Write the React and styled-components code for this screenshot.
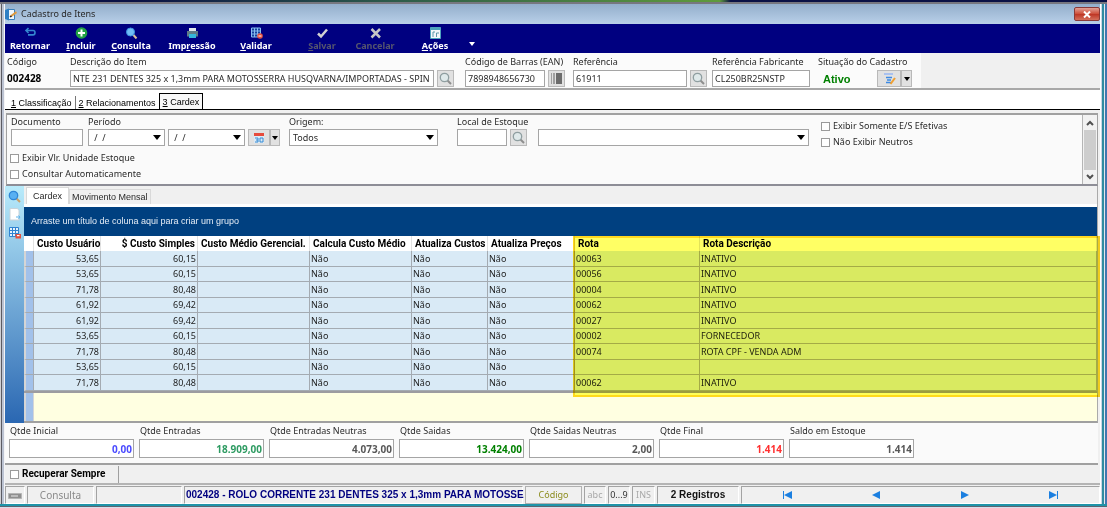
import React from 'react'
import styled, { createGlobalStyle, css } from 'styled-components'

const GlobalStyle = createGlobalStyle`
  * {
    box-sizing: border-box;
  }
  body {
    margin: 0;
    background: #d4dfec;
    color: #2a2a2a;
    font-family: 'Noto Sans', 'Open Sans', sans-serif;
    font-size: 9px;
    line-height: 12px;
  }
  button, input, select {
    font: inherit;
    color: inherit;
    margin: 0;
    padding: 0;
    border-radius: 0;
  }
`

/* window frame */

const Desktop = styled.div`
  display: flex;
  flex-direction: column;
  min-height: 100vh;
`

const Wallpaper = styled.div`
  height: 4px;
  border-bottom: 2px solid #77777f;
  background: linear-gradient(90deg, #0a1145 12%, #2c5a4a 35%, #5f9b3c 65%, #0a1145 66%);
`

const Frame = styled.div`
  display: flex;
  flex: 1;
`

const LeftEdge = styled.div`
  width: 5px;
  background: linear-gradient(90deg, #d0d0d4 0 1px, #5b5b63 1px 2px, #bcc3d2 2px 4px, #f4f4f6 4px);
`

const RightEdge = styled.div`
  width: 7px;
  background: linear-gradient(90deg, #fff 0 1px, #c9d7e5 1px 2px, #2f8ca0 2px 4px, #e4e8ec 4px 5px, #3f78b0 5px);
`

const Window = styled.main`
  flex: 1;
  min-width: 0;
  display: flex;
  flex-direction: column;
  background: #f0f0f0;
`

const BottomEdge = styled.div`
  height: 4px;
  border-top: 2px solid #1e93a8;
  border-bottom: 1px solid #d4dfec;
  background: #5c6470;
`

const TitleBar = styled.header`
  display: flex;
  align-items: center;
  gap: 4px;
  height: 20px;
  background: linear-gradient(#93aecb, #b9d0e9);
`

const Title = styled.h1`
  flex: 1;
  margin: 0;
  font-size: 9px;
  font-weight: 400;
`

const CloseButton = styled.button`
  display: flex;
  align-items: center;
  justify-content: center;
  width: 26px;
  height: 14px;
  border: 1px solid #8a3a38;
  border-radius: 2px;
  background: linear-gradient(#e2a297, #cd4c37 50%, #bd3524 51%, #d4705c);
`

/* toolbar */

const Toolbar = styled.nav`
  display: flex;
  height: 29px;
  background: #000080;
`

const ToolButton = styled.button`
  display: flex;
  flex-direction: column;
  align-items: center;
  width: ${(p) => p.$width}px;
  margin-left: ${(p) => (p.$apart ? 16 : 0)}px;
  padding-top: 3px;
  border: 0;
  background: none;
  color: ${(p) => (p.disabled ? '#55556e' : '#fff')};
  font-size: 9px;
  font-weight: 700;
  line-height: 13px;
`

const CaretButton = styled.button`
  width: 14px;
  padding-top: 10px;
  border: 0;
  background: none;
  line-height: 0;
`

/* shared form parts */

const Field = styled.div`
  display: flex;
  flex-direction: column;
  width: ${(p) => (p.$width ? `${p.$width}px` : 'auto')};
  margin-right: ${(p) => p.$after || 0}px;
`

const Label = styled.label`
  height: ${(p) => p.$height || 14}px;
  white-space: nowrap;
`

const Line = styled.div`
  display: flex;
  align-items: center;
  gap: 3px;
`

const box = css`
  height: 17px;
  border: 1px solid #a5a5a5;
  background: #fff;
`

const TextBox = styled.input`
  ${box}
  flex: 1;
  min-width: 0;
  padding: 0 2px;
`

const SmallButton = styled.button`
  display: flex;
  align-items: center;
  justify-content: center;
  flex: none;
  width: ${(p) => p.$width || 17}px;
  height: 17px;
  border: 1px solid #b9b9b9;
  background: #e1e1e1;
`

const Combo = styled.div`
  ${box}
  display: grid;
  grid-template-columns: 1fr 15px;
  align-items: center;
  width: ${(p) => p.$width}px;

  select, input {
    grid-area: 1 / 1 / 2 / 3;
    width: 100%;
    height: 15px;
    padding: 0 3px;
    border: 0;
    background: none;
    appearance: none;
  }
  svg {
    grid-area: 1 / 2;
    justify-self: center;
    pointer-events: none;
  }
`

const CheckLabel = styled.label`
  display: flex;
  align-items: center;
  gap: 3px;
  height: 16px;
  white-space: nowrap;
  font-weight: ${(p) => (p.$bold ? 700 : 400)};
`

const CheckBox = styled.input`
  width: 9px;
  height: 9px;
  border: 1px solid #9a9a9a;
  background: #fff;
  appearance: none;
`

/* item header */

const ItemHeader = styled.section`
  display: flex;
  height: 37px;
  border-bottom: 2px solid #a8a8a8;
`

const ItemFields = styled.div`
  display: flex;
  width: 916px;
  padding: 3px 0 0 2px;
  background: #fbfbfb;
`

const Code = styled.output`
  color: #000;
  font-size: 10px;
  font-weight: 700;
  line-height: 17px;
`

const Status = styled.output`
  width: 56px;
  padding-left: 5px;
  color: #008000;
  font-family: 'Liberation Sans', Arial, sans-serif;
  font-size: 11px;
  font-weight: 700;
`

const SplitButton = styled.div`
  display: flex;
`

/* tabs */

const MainTabs = styled.div`
  display: flex;
  align-items: flex-end;
  height: 20px;
  border-bottom: 1px solid #000;
  background: #fff;
  font-family: 'Liberation Sans', Arial, sans-serif;
`

const MainTab = styled.button`
  height: ${(p) => (p.$active ? 16 : 13)}px;
  padding: 0 3px;
  border: 0;
  border-right: ${(p) => (p.$last ? 0 : 1)}px solid #777;
  background: none;
  color: #000;
  white-space: nowrap;
  &:first-child {
    padding-left: 6px;
  }
  ${(p) =>
    p.$active &&
    css`
      border: 1px solid #000;
      border-bottom: 0;
      background: #f8f8f8;
    `}
`

const Filters = styled.section`
  display: flex;
  height: 73px;
  margin: 3px 2px 0 1px;
  border: 1px solid #a0a0a0;
  border-top-width: 2px;
  border-bottom: 2px solid #8d8d96;
  background: #fafafa;
`

const FilterBody = styled.div`
  display: flex;
  flex-direction: column;
  flex: 1;
  padding: 1px 0 0 3px;
`

const FilterRow = styled.div`
  display: flex;
  height: 34px;
  padding-left: 1px;
`

const FilterChecks = styled.div`
  padding-top: 2px;
`

const ScrollBar = styled.div`
  display: flex;
  flex-direction: column;
  align-items: center;
  width: 15px;
  padding: 5px 1px 4px;
  gap: 4px;
  border-left: 1px solid #b5b5b5;
  background: #f2f2f2;
`

const Thumb = styled.div`
  align-self: stretch;
  height: 40px;
  background: #cdcdcd;
`

/* grid */

const GridArea = styled.section`
  display: flex;
  margin-right: 2px;
`

const SideBar = styled.div`
  display: flex;
  flex-direction: column;
  align-items: center;
  gap: 5px;
  width: 19px;
  padding-top: 4px;
  background: linear-gradient(#b9ebfb, #2a67b2);
`

const SideButton = styled.button`
  height: 13px;
  border: 0;
  background: none;
  line-height: 0;
`

const GridMain = styled.div`
  display: flex;
  flex-direction: column;
  flex: 1;
  min-width: 0;
  border-right: 1px solid #aaa;
  border-bottom: 2px solid #a0a0a0;
  background: #ffffe1;
`

const GridTabs = styled.div`
  display: flex;
  align-items: flex-end;
  height: 21px;
  padding-left: 2px;
  border-bottom: 3px solid #fff;
  background: #f0f0f0;
`

const GridTab = styled.button`
  height: ${(p) => (p.$active ? 17 : 15)}px;
  padding: 0 ${(p) => (p.$active ? 6 : 2)}px;
  border: 1px solid #d9d9d9;
  border-bottom: 0;
  background: ${(p) => (p.$active ? '#fff' : '#f0f0f0')};
  font-family: 'Liberation Sans', Arial, sans-serif;
  white-space: nowrap;
`

const GroupBar = styled.div`
  height: 29px;
  padding-left: 7px;
  background: #004080;
  color: #e4ecf5;
  font-family: 'Liberation Sans', Arial, sans-serif;
  line-height: 29px;
`

const TableWrap = styled.div`
  position: relative;
`

const Table = styled.table`
  width: 100%;
  border-collapse: separate;
  border-spacing: 0;
  table-layout: fixed;
  border-bottom: 2px solid #9c9ca0;
  color: #1c1c1c;

  th {
    height: 15px;
    padding: 0 2px 0 3px;
    border-right: 1px solid #e2e2e2;
    background: #fff;
    color: #000;
    font-family: Roboto, Arial, sans-serif;
    font-size: 10px;
    font-weight: 700;
    text-align: left;
    white-space: nowrap;
  }
  td {
    height: 16px;
    padding: 0 1px;
    border-right: 1px solid #a4abb2;
    border-bottom: 1px solid #a4abb2;
    background: #d9eaf6;
    line-height: 14px;
  }
  tr:nth-child(even) td {
    height: 15px;
  }
  td:first-child {
    border-left: 2px solid #d5d5d5;
    background: #a2c1ea;
  }
  th.num, td.num {
    text-align: right;
  }
`

const Highlight = styled.div`
  position: absolute;
  top: 0;
  right: -3px;
  bottom: -4px;
  left: 549px;
  border: 2px solid #ffd91f;
  background: #ffff64;
  mix-blend-mode: multiply;
  pointer-events: none;
`

const EmptyRows = styled.div`
  width: 10px;
  height: 28px;
  border-right: 1px solid #d5d5d5;
  border-left: 2px solid #d5d5d5;
  background: #a2c1ea;
`

/* totals */

const Totals = styled.section`
  display: flex;
  gap: 5px;
  height: 42px;
  margin-right: 2px;
  padding: 2px 4px 0;
  border-bottom: 2px solid #a0a0a0;
  background: #fafafa;

  label {
    padding-left: 1px;
  }
`

const TotalBox = styled.input`
  width: 100%;
  height: 19px;
  padding: 0 1px;
  border: 1px solid #a5a5a5;
  background: #fff;
  color: ${(p) => p.$color};
  font-size: 10px;
  font-weight: 700;
  text-align: right;
`

const RecoverBar = styled.div`
  display: flex;
  height: 20px;
  padding-top: 1px;
  border-bottom: 2px solid #b4b4b4;
  color: #000;
  font-family: Roboto, Arial, sans-serif;
  font-size: 10px;
`

const RecoverCell = styled.div`
  width: 114px;
  padding-left: 5px;
  border-right: 1px solid #a0a0a0;
`

/* status bar */

const StatusBar = styled.footer`
  display: flex;
  gap: 2px;
  height: 19px;
  padding-top: 1px;
  color: #8a8a8a;
`

const Panel = styled.div`
  display: flex;
  align-items: center;
  justify-content: ${(p) => p.$justify || 'center'};
  flex: ${(p) => (p.$width ? 'none' : 1)};
  width: ${(p) => (p.$width ? `${p.$width}px` : 'auto')};
  border: 1px solid #a3a3a3;
  border-right-color: #fff;
  border-bottom-color: #fff;
  color: ${(p) => p.$color || 'inherit'};
  font-size: ${(p) => (p.$small ? 9 : 10)}px;
  white-space: nowrap;
`

const ItemName = styled.strong`
  padding-left: 1px;
  font-family: 'Liberation Sans', Arial, sans-serif;
`

const Records = styled.strong`
  font-family: 'Liberation Sans', Arial, sans-serif;
`

const StatusButton = styled.button`
  width: 57px;
  border: 1px solid #b0b0b0;
  background: #f0f0f0;
  color: #8c8c1e;
`

const NavButton = styled.button`
  border: 0;
  background: none;
  line-height: 0;
`

/* icons */

const Lens = ({ blue, size = 13 }) => (
  <svg width={size} height={size} viewBox="0 0 13 13">
    <path d="M8.5 8.5 12 12" stroke={blue ? '#c9a06a' : '#8e8e8e'} strokeWidth="2" />
    <circle cx="5.5" cy="5.5" r="4.2" fill={blue ? '#58b0f2' : '#dfe9ea'} stroke={blue ? '#2f86d6' : '#8f9ea0'} strokeWidth="1.3" />
  </svg>
)

const Caret = ({ color = '#000' }) => (
  <svg width="8" height="5" viewBox="0 0 8 5">
    <path d="M0 0h8L4 5z" fill={color} />
  </svg>
)

const SmallCaret = ({ color = '#000' }) => (
  <svg width="6" height="4" viewBox="0 0 6 4">
    <path d="M0 0h6L3 4z" fill={color} />
  </svg>
)

const Chevron = ({ up }) => (
  <svg width="8" height="6" viewBox="0 0 8 6">
    <path d={up ? 'M1 5l3-3 3 3' : 'M1 1l3 3 3-3'} fill="none" stroke="#505050" strokeWidth="2" />
  </svg>
)

const WindowIcon = () => (
  <svg width="12" height="13" viewBox="0 0 12 13">
    <path d="M3 1.5h6.5v10H3z" fill="#eef6fc" stroke="#3b80ba" />
    <path d="M0 2 4 .5v12L0 11z" fill="#2f7fc4" />
    <path d="M5.5 8.5 11.500 4" fill="none" stroke="#e09a3c" strokeWidth="2" />
    <path d="m5 9 1.500-1" stroke="#223" strokeWidth="1.500" />
  </svg>
)

const icons = {
  back: (
    <path d="M4.500 1 2 3.500 4.500 6M2 3.500h7q2 0 2 2.200t-2 2.200H4" fill="none" stroke="#3487cf" strokeWidth="1.600" />
  ),
  add: (
    <>
      <circle cx="6.500" cy="6" r="5.800" fill="#23a344" />
      <path d="M6.500 2.500v7M3 6h7" stroke="#fff" strokeWidth="2" />
    </>
  ),
  search: (
    <>
      <path d="m8 7.500 3.500 4" stroke="#d9bf9a" strokeWidth="2" />
      <circle cx="5.500" cy="5" r="4" fill="#71bdf5" stroke="#3b92e0" />
    </>
  ),
  print: (
    <>
      <path d="M3 1h7v3H3z" fill="#dfe7ea" />
      <path d="M1 4h11v5.500H1z" fill="#5f7c87" />
      <path d="M3 7h7v4H3z" fill="#35b6dc" />
    </>
  ),
  validate: (
    <>
      <path d="M1.500 1h9v9h-9zM1.500 4h9M1.500 7h9M4.500 1v9M7.500 1v9" fill="#17409c" stroke="#86bdf0" />
      <circle cx="10" cy="9" r="2.800" fill="#e34f3f" />
      <path d="M8.500 9h3" stroke="#fff" />
    </>
  ),
  save: <path d="M2 6.500 5 9.500 11 2.500" fill="none" stroke="#d2d2d2" strokeWidth="2.500" />,
  cancel: <path d="m2.500 2 8.500 8.500M11 2l-8.500 8.500" fill="none" stroke="#c6c6c6" strokeWidth="2.500" />,
  actions: (
    <>
      <path d="M1.500.5h10v11h-10z" fill="#f2f7fa" stroke="#4da3bd" />
      <path d="M1 1h11v2H1z" fill="#4da3bd" />
      <path d="M4 10V5h2M7.500 10V6H10" fill="none" stroke="#5a98ab" />
    </>
  ),
}

const ToolIcon = ({ name }) => (
  <svg width="13" height="12" viewBox="0 0 13 12">
    {icons[name]}
  </svg>
)

const Barcode = () => (
  <svg width="11" height="11" viewBox="0 0 11 11">
    <path d="M0 0h1v11H0zM2 0h2v11H2z" fill="#a0a0a0" />
    <path d="M5 0h6v11H5z" fill="#6c6c6c" />
  </svg>
)

const EditIcon = () => (
  <svg width="13" height="12" viewBox="0 0 13 12">
    <path d="M1 1h9" stroke="#a9c1ef" strokeWidth="2" />
    <path d="M3 4.500h6M4 7h4M3 9.500h5" stroke="#3d8ae4" strokeWidth="1.400" />
    <path d="m7.500 11 4.500-6" stroke="#f0a030" strokeWidth="2" />
  </svg>
)

const CalendarIcon = () => (
  <svg width="12" height="12" viewBox="0 0 12 12">
    <path d="M1 1h10v10H1z" fill="#dceaf6" />
    <path d="M1 1h10v3H1z" fill="#e64b3c" />
    <path d="M2 6h3v4H2M3 8h2M7 6h3v4H7z" fill="none" stroke="#348ad2" />
  </svg>
)

const PageIcon = () => (
  <svg width="12" height="13" viewBox="0 0 12 13">
    <path d="M1 .5h7.500l1.500 2v9.500H1z" fill="#fff" stroke="#c9d3da" />
    <path d="M7 9h4M9.500 7.500 11 9l-1.500 2" fill="none" stroke="#5fb5ec" />
  </svg>
)

const SheetIcon = () => (
  <svg width="12" height="12" viewBox="0 0 12 12">
    <path d="M.5.5h9v9h-9zM.5 3.500h9M.5 6.500h9M3.500.5v9M6.500.5v9" fill="#e6f3fd" stroke="#2f83d2" />
    <path d="M6.500 7H12v4.500H6.500z" fill="#e4503f" />
    <path d="M8 8h2.500v1.200H8z" fill="#fff" />
  </svg>
)

const DriveIcon = () => (
  <svg width="14" height="7" viewBox="0 0 14 7">
    <path d="M.5 1.500h13v5H.5z" fill="#8f8f8f" stroke="#b5b5b5" />
    <path d="M3 4h7" stroke="#e8e8e8" />
  </svg>
)

const NavIcon = ({ back, edge }) => (
  <svg width="10" height="8" viewBox="0 0 10 8">
    <g transform={back ? 'translate(10 0) scale(-1 1)' : undefined}>
      <path d={edge ? 'M0 0l8 4-8 4z' : 'M1 0l8 4-8 4z'} fill="#1b7fe0" />
      {edge && <path d="M8 0h1v8H8z" fill="#1b7fe0" />}
    </g>
  </svg>
)

/* data */

const tools = [
  { icon: 'back', text: 'Retornar', width: 50 },
  { icon: 'add', key: 'I', text: 'ncluir', width: 52 },
  { icon: 'search', key: 'C', text: 'onsulta', width: 48 },
  { icon: 'print', before: 'Imp', key: 'r', text: 'essão', width: 74 },
  { icon: 'validate', key: 'V', text: 'alidar', width: 54 },
  { icon: 'save', key: 'S', text: 'alvar', width: 46, off: true, apart: true },
  { icon: 'cancel', text: 'Cancelar', width: 60, off: true },
  { icon: 'actions', key: 'A', text: 'ções', width: 60 },
]

const columns = [
  { title: 'Custo Usuário', width: 67, num: true },
  { title: '$ Custo Simples', width: 97, num: true },
  { title: 'Custo Médio Gerencial.', width: 112 },
  { title: 'Calcula Custo Médio', width: 102 },
  { title: 'Atualiza Custos', width: 76 },
  { title: 'Atualiza Preços', width: 87 },
  { title: 'Rota', width: 125 },
  { title: 'Rota Descrição' },
]

const rows = [
  ['53,65', '60,15', '00063', 'INATIVO'],
  ['53,65', '60,15', '00056', 'INATIVO'],
  ['71,78', '80,48', '00004', 'INATIVO'],
  ['61,92', '69,42', '00062', 'INATIVO'],
  ['61,92', '69,42', '00027', 'INATIVO'],
  ['53,65', '60,15', '00002', 'FORNECEDOR'],
  ['71,78', '80,48', '00074', 'ROTA CPF - VENDA ADM'],
  ['53,65', '60,15', '', ''],
  ['71,78', '80,48', '00062', 'INATIVO'],
]

const totals = [
  ['Qtde Inicial', '0,00', '#4a4aff'],
  ['Qtde Entradas', '18.909,00', '#2e9b62'],
  ['Qtde Entradas Neutras', '4.073,00', '#585858'],
  ['Qtde Saidas', '13.424,00', '#008000'],
  ['Qtde Saidas Neutras', '2,00', '#585858'],
  ['Qtde Final', '1.414', '#ff3030'],
  ['Saldo em Estoque', '1.414', '#585858'],
]

const Check = ({ children, bold }) => (
  <CheckLabel $bold={bold}>
    <CheckBox type="checkbox" />
    {children}
  </CheckLabel>
)

const DateCombo = ({ id, label }) => (
  <Combo $width={77}>
    <input id={id} aria-label={label} defaultValue=" /  /" />
    <Caret />
  </Combo>
)

const ItemForm = () => (
  <ItemHeader>
    <ItemFields>
      <Field $width={63}>
        <Label htmlFor="code">Código</Label>
        <Code id="code">002428</Code>
      </Field>
      <Field $width={384} $after={11}>
        <Label htmlFor="desc">Descrição do Item</Label>
        <Line>
          <TextBox id="desc" defaultValue="NTE 231 DENTES 325 x 1,3mm PARA MOTOSSERRA HUSQVARNA/IMPORTADAS - SPIN" />
          <SmallButton aria-label="Pesquisar item"><Lens /></SmallButton>
        </Line>
      </Field>
      <Field $width={100} $after={8}>
        <Label htmlFor="ean">Código de Barras (EAN)</Label>
        <Line>
          <TextBox id="ean" defaultValue="7898948656730" />
          <SmallButton aria-label="Código de barras"><Barcode /></SmallButton>
        </Line>
      </Field>
      <Field $width={134} $after={5}>
        <Label htmlFor="ref">Referência</Label>
        <Line>
          <TextBox id="ref" defaultValue="61911" />
          <SmallButton aria-label="Pesquisar referência"><Lens /></SmallButton>
        </Line>
      </Field>
      <Field $width={98} $after={8}>
        <Label htmlFor="maker">Referência Fabricante</Label>
        <Line>
          <TextBox id="maker" defaultValue="CL250BR25NSTP" />
        </Line>
      </Field>
      <Field>
        <Label htmlFor="status">Situação do Cadastro</Label>
        <Line>
          <Status id="status">Ativo</Status>
          <SplitButton>
            <SmallButton $width={24} aria-label="Alterar situação"><EditIcon /></SmallButton>
            <SmallButton $width={11} aria-label="Opções"><SmallCaret /></SmallButton>
          </SplitButton>
        </Line>
      </Field>
    </ItemFields>
  </ItemHeader>
)

const FilterPanel = () => (
  <Filters>
    <FilterBody>
      <FilterRow>
        <Field $width={72} $after={5}>
          <Label htmlFor="doc" $height={13}>Documento</Label>
          <Line><TextBox id="doc" /></Line>
        </Field>
        <Field $after={9}>
          <Label htmlFor="from" $height={13}>Período</Label>
          <Line>
            <DateCombo id="from" label="Período inicial" />
            <DateCombo id="to" label="Período final" />
            <SplitButton>
              <SmallButton $width={22} aria-label="Calendário"><CalendarIcon /></SmallButton>
              <SmallButton $width={10} aria-label="Períodos"><SmallCaret /></SmallButton>
            </SplitButton>
          </Line>
        </Field>
        <Field $after={19}>
          <Label htmlFor="origin" $height={13}>Origem:</Label>
          <Combo $width={149}>
            <select id="origin"><option>Todos</option></select>
            <Caret />
          </Combo>
        </Field>
        <Field $width={70} $after={11}>
          <Label htmlFor="place" $height={13}>Local de Estoque</Label>
          <Line>
            <TextBox id="place" />
            <SmallButton aria-label="Pesquisar local"><Lens /></SmallButton>
          </Line>
        </Field>
        <Field $after={12}>
          <Label as="span" $height={13} />
          <Combo $width={271}>
            <select aria-label="Local de Estoque"><option></option></select>
            <Caret />
          </Combo>
        </Field>
        <FilterChecks>
          <Check>Exibir Somente E/S Efetivas</Check>
          <Check>Não Exibir Neutros</Check>
        </FilterChecks>
      </FilterRow>
      <Check>Exibir Vlr. Unidade Estoque</Check>
      <Check>Consultar Automaticamente</Check>
    </FilterBody>
    <ScrollBar>
      <Chevron up />
      <Thumb />
      <Chevron />
    </ScrollBar>
  </Filters>
)

const CardexTable = () => (
  <TableWrap>
    <Table>
      <colgroup>
        <col style={{ width: 10 }} />
        {columns.map((c) => (
          <col key={c.title} style={{ width: c.width }} />
        ))}
      </colgroup>
      <thead>
        <tr>
          <th></th>
          {columns.map((c) => (
            <th key={c.title} className={c.num ? 'num' : ''}>{c.title}</th>
          ))}
        </tr>
      </thead>
      <tbody>
        {rows.map(([user, simple, route, desc], i) => (
          <tr key={i}>
            <td></td>
            <td className="num">{user}</td>
            <td className="num">{simple}</td>
            <td></td>
            <td>Não</td>
            <td>Não</td>
            <td>Não</td>
            <td>{route}</td>
            <td>{desc}</td>
          </tr>
        ))}
      </tbody>
    </Table>
    <Highlight />
  </TableWrap>
)

const App = () => (
  <Desktop>
    <GlobalStyle />
    <Wallpaper />
    <Frame>
      <LeftEdge />
      <Window>
        <TitleBar>
          <WindowIcon />
          <Title>Cadastro de Itens</Title>
          <CloseButton aria-label="Fechar">
            <svg width="8" height="7" viewBox="0 0 8 7">
              <path d="m1 .5 6 6m0-6-6 6" stroke="#fff" strokeWidth="2" />
            </svg>
          </CloseButton>
        </TitleBar>
        <Toolbar>
          {tools.map((t) => (
            <ToolButton key={t.icon} $width={t.width} $apart={t.apart} disabled={t.off}>
              <ToolIcon name={t.icon} />
              <span>
                {t.before}
                {t.key && <u>{t.key}</u>}
                {t.text}
              </span>
            </ToolButton>
          ))}
          <CaretButton aria-label="Mais ações"><SmallCaret color="#fff" /></CaretButton>
        </Toolbar>
        <ItemForm />
        <MainTabs>
          <MainTab><u>1</u> Classificação</MainTab>
          <MainTab $last><u>2</u> Relacionamentos</MainTab>
          <MainTab $active><u>3</u> Cardex</MainTab>
        </MainTabs>
        <FilterPanel />
        <GridArea>
          <SideBar>
            <SideButton aria-label="Consultar"><Lens blue /></SideButton>
            <SideButton aria-label="Documento"><PageIcon /></SideButton>
            <SideButton aria-label="Planilha"><SheetIcon /></SideButton>
          </SideBar>
          <GridMain>
            <GridTabs>
              <GridTab $active>Cardex</GridTab>
              <GridTab>Movimento Mensal</GridTab>
            </GridTabs>
            <GroupBar>Arraste um título de coluna aqui para criar um grupo</GroupBar>
            <CardexTable />
            <EmptyRows />
          </GridMain>
        </GridArea>
        <Totals>
          {totals.map(([label, value, color]) => (
            <Field key={label} $width={125}>
              <Label htmlFor={label}>{label}</Label>
              <TotalBox id={label} defaultValue={value} $color={color} readOnly />
            </Field>
          ))}
        </Totals>
        <RecoverBar>
          <RecoverCell><Check bold>Recuperar Sempre</Check></RecoverCell>
        </RecoverBar>
        <StatusBar>
          <Panel $width={20}><DriveIcon /></Panel>
          <Panel $width={67}>Consulta</Panel>
          <Panel $width={86} />
          <Panel $width={339} $justify="flex-start" $color="#000080">
            <ItemName>002428 - ROLO CORRENTE 231 DENTES 325 x 1,3mm PARA MOTOSSE</ItemName>
          </Panel>
          <StatusButton>Código</StatusButton>
          <Panel $width={22} $color="#a8a8a8" $small>abc</Panel>
          <Panel $width={22} $color="#333" $small>0...9</Panel>
          <Panel $width={23} $color="#a8a8a8" $small>INS</Panel>
          <Panel $width={82} $color="#111"><Records>2 Registros</Records></Panel>
          <Panel $justify="space-around">
            <NavButton aria-label="Primeiro"><NavIcon back edge /></NavButton>
            <NavButton aria-label="Anterior"><NavIcon back /></NavButton>
            <NavButton aria-label="Próximo"><NavIcon /></NavButton>
            <NavButton aria-label="Último"><NavIcon edge /></NavButton>
          </Panel>
        </StatusBar>
      </Window>
      <RightEdge />
    </Frame>
    <BottomEdge />
  </Desktop>
)

export default App
